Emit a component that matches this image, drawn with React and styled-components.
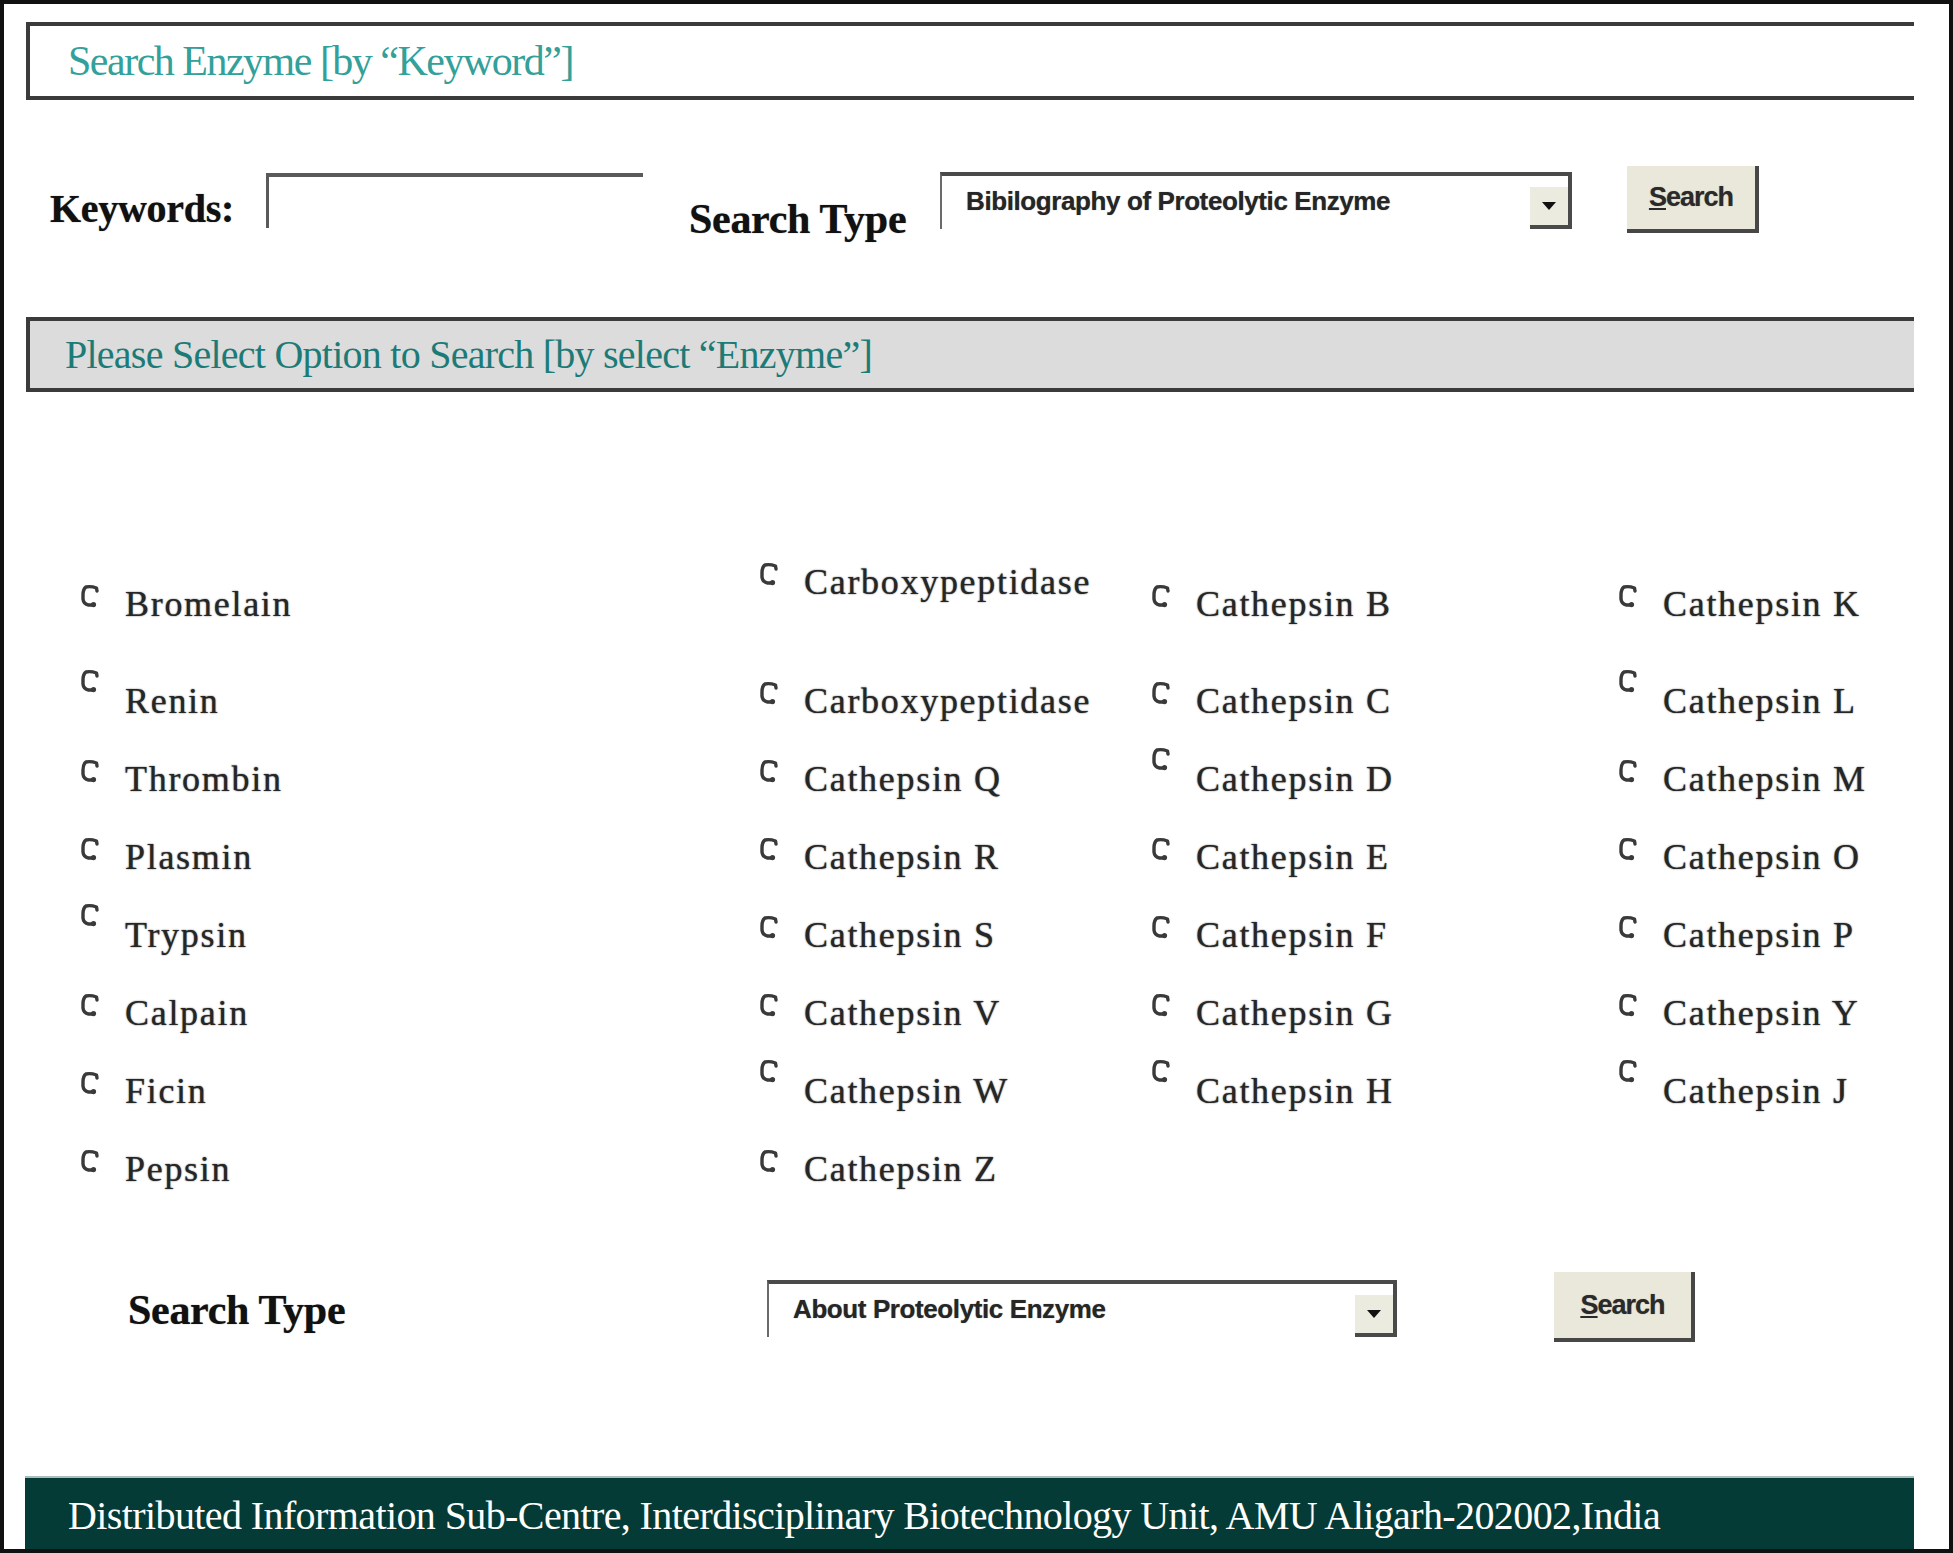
import React from 'react';
import styled, { createGlobalStyle } from 'styled-components';

const GlobalStyle = createGlobalStyle`
  html, body {
    margin: 0;
    padding: 0;
    background: #ffffff;
  }
  body {
    font-family: "Liberation Serif", "Times New Roman", serif;
  }
`;

const Frame = styled.div`
  width: 1953px;
  height: 1553px;
  box-sizing: border-box;
  border: 4px solid #111111;
  display: flex;
  flex-direction: column;
  background: #ffffff;
  overflow: hidden;
`;

const SectionBar = styled.div`
  box-sizing: border-box;
  height: ${(p) => p.$h}px;
  margin: ${(p) => p.$top}px 35px 0 22px;
  border-top: 4px solid #3b3b3b;
  border-left: 4px solid #3b3b3b;
  border-bottom: 4px solid #3b3b3b;
  background: ${(p) => (p.$shaded ? '#dcdcdc' : '#ffffff')};
  display: flex;
  align-items: center;
  padding-left: ${(p) => p.$pad}px;
`;

const SectionTitle = styled.span`
  font-family: "Liberation Serif", "Times New Roman", serif;
  font-size: ${(p) => p.$size}px;
  color: ${(p) => p.$color};
  letter-spacing: ${(p) => p.$ls}px;
  line-height: 1;
`;

const FormRow = styled.div`
  display: flex;
  align-items: flex-start;
  margin-top: ${(p) => p.$top}px;
  padding-left: ${(p) => p.$pad}px;
  height: ${(p) => p.$h}px;
`;

const FieldLabel = styled.span`
  font-family: "Liberation Serif", "Times New Roman", serif;
  font-weight: bold;
  font-size: ${(p) => p.$size}px;
  line-height: 44px;
  color: #111111;
  width: ${(p) => p.$w}px;
  margin-top: ${(p) => p.$mt}px;
  margin-right: ${(p) => p.$gap}px;
  white-space: nowrap;
  letter-spacing: -0.3px;
  text-shadow: 0 0 1px rgba(0, 0, 0, 0.6);
`;

const TextBox = styled.div`
  box-sizing: border-box;
  width: 377px;
  height: 55px;
  margin-top: 7px;
  margin-right: 46px;
  border-top: 4px solid #5a5a5a;
  border-left: 3px solid #5a5a5a;
`;

const SelectBox = styled.div`
  box-sizing: border-box;
  width: ${(p) => p.$w}px;
  height: 57px;
  margin-top: ${(p) => p.$mt}px;
  margin-right: ${(p) => p.$gap}px;
  border-top: 4px solid #4a4a4a;
  border-left: 2px solid #6a6a6a;
  border-right: 4px solid #4a4a4a;
  display: flex;
  align-items: flex-start;
  justify-content: space-between;
`;

const SelectText = styled.span`
  font-family: "Liberation Sans", Arial, sans-serif;
  font-weight: bold;
  font-size: 26px;
  letter-spacing: -0.4px;
  color: #262626;
  margin-top: 10px;
  margin-left: 24px;
  white-space: nowrap;
  text-shadow: 0 0 1px rgba(0, 0, 0, 0.5);
`;

const ArrowButton = styled.div`
  box-sizing: border-box;
  align-self: flex-end;
  width: 38px;
  height: 42px;
  background: #ecebdf;
  border-bottom: 4px solid #4a4a4a;
  display: flex;
  align-items: center;
  justify-content: center;
`;

const PushButton = styled.div`
  box-sizing: border-box;
  width: ${(p) => p.$w}px;
  height: ${(p) => p.$h}px;
  margin-top: ${(p) => p.$mt}px;
  background: #e9e8da;
  border-right: 4px solid #474747;
  border-bottom: 4px solid #474747;
  display: flex;
  align-items: center;
  justify-content: center;
  font-family: "Liberation Sans", Arial, sans-serif;
  font-size: 27px;
  font-weight: bold;
  letter-spacing: -1px;
  color: #2a2a2a;
  text-shadow: 0 0 1px rgba(0, 0, 0, 0.4);
`;

const Accel = styled.span`
  text-decoration: underline;
`;

const OptionGrid = styled.div`
  display: grid;
  grid-template-columns: 679px 392px 467px 1fr;
  grid-template-rows: 116px repeat(7, 78px);
  margin-top: 154px;
  margin-left: 76px;
`;

const Option = styled.label`
  display: flex;
  align-items: center;
  align-self: center;
  margin-bottom: ${(p) => (p.$raise ? 44 : 0)}px;
`;

const RadioMark = styled.svg`
  width: 21px;
  height: 26px;
  flex: none;
  margin-right: 24px;
  margin-bottom: ${(p) => (p.$high ? 40 : 16)}px;
`;

const OptionText = styled.span`
  font-family: "Liberation Serif", "Times New Roman", serif;
  font-size: 36px;
  line-height: 44px;
  letter-spacing: 1.7px;
  color: #262626;
  white-space: nowrap;
  text-shadow: 0 0 1.5px rgba(0, 0, 0, 0.75);
`;

const Footer = styled.div`
  box-sizing: border-box;
  margin: auto 35px 0 21px;
  height: 73px;
  background: #053b36;
  border-top: 2px solid #a9bdbb;
  display: flex;
  align-items: center;
  padding-left: 43px;
  padding-top: 4px;
  font-family: "Liberation Serif", "Times New Roman", serif;
  font-size: 40px;
  letter-spacing: -0.6px;
  color: #ffffff;
  white-space: nowrap;
`;

const Radio = ({ high }) => (
  <RadioMark $high={high} viewBox="0 0 21 26">
    <path
      d="M17 8 L16.5 5 Q11 3 6 4 Q3 6 3 12 L3 16 Q3.5 21 8.5 22 L13 22"
      fill="none"
      stroke="#3a3a3a"
      strokeWidth="3.4"
      strokeLinecap="round"
      strokeLinejoin="round"
    />
    <circle cx="13.5" cy="21.6" r="2.6" fill="#3a3a3a" />
  </RadioMark>
);

const DownArrow = () => (
  <svg width="14" height="10" viewBox="0 0 14 10">
    <path d="M0 1 L14 1 L7 9 Z" fill="#111" />
  </svg>
);

const columns = [
  [
    { name: 'Bromelain' },
    { name: 'Renin', high: true },
    { name: 'Thrombin' },
    { name: 'Plasmin' },
    { name: 'Trypsin', high: true },
    { name: 'Calpain' },
    { name: 'Ficin' },
    { name: 'Pepsin' },
  ],
  [
    { name: 'Carboxypeptidase', raise: true },
    { name: 'Carboxypeptidase' },
    { name: 'Cathepsin Q' },
    { name: 'Cathepsin R' },
    { name: 'Cathepsin S' },
    { name: 'Cathepsin V' },
    { name: 'Cathepsin W', high: true },
    { name: 'Cathepsin Z' },
  ],
  [
    { name: 'Cathepsin B' },
    { name: 'Cathepsin C' },
    { name: 'Cathepsin D', high: true },
    { name: 'Cathepsin E' },
    { name: 'Cathepsin F' },
    { name: 'Cathepsin G' },
    { name: 'Cathepsin H', high: true },
  ],
  [
    { name: 'Cathepsin K' },
    { name: 'Cathepsin L', high: true },
    { name: 'Cathepsin M' },
    { name: 'Cathepsin O' },
    { name: 'Cathepsin P' },
    { name: 'Cathepsin Y' },
    { name: 'Cathepsin J', high: true },
  ],
];

const App = () => {
  return (
    <>
      <GlobalStyle />
      <Frame>
        <SectionBar $top={18} $h={78} $pad={38}>
          <SectionTitle $size={42} $ls={-1.5} $color="#33a09a">
            Search Enzyme [by “Keyword”]
          </SectionTitle>
        </SectionBar>

        <FormRow $top={66} $pad={46} $h={67}>
          <FieldLabel $size={40} $w={187} $mt={21} $gap={29}>Keywords:</FieldLabel>
          <TextBox />
          <FieldLabel $size={42} $w={214} $mt={31} $gap={37}>Search Type</FieldLabel>
          <SelectBox $w={632} $mt={6} $gap={55}>
            <SelectText>Bibilography of Proteolytic Enzyme</SelectText>
            <ArrowButton>
              <DownArrow />
            </ArrowButton>
          </SelectBox>
          <PushButton $w={132} $h={67} $mt={0}>
            <Accel>S</Accel>earch
          </PushButton>
        </FormRow>

        <SectionBar $top={84} $h={75} $pad={35} $shaded>
          <SectionTitle $size={40} $ls={-0.75} $color="#1d7b77">
            Please Select Option to Search [by select “Enzyme”]
          </SectionTitle>
        </SectionBar>

        <OptionGrid>
          {columns.map((col, ci) =>
            col.map((item, ri) => (
              <Option
                key={`${ci}-${ri}`}
                $raise={item.raise}
                style={{ gridColumn: ci + 1, gridRow: ri + 1 }}
              >
                <Radio high={item.high} />
                <OptionText>{item.name}</OptionText>
              </Option>
            ))
          )}
        </OptionGrid>

        <FormRow $top={62} $pad={124} $h={72}>
          <FieldLabel $size={42} $w={218} $mt={18} $gap={421}>Search Type</FieldLabel>
          <SelectBox $w={630} $mt={10} $gap={157}>
            <SelectText>About Proteolytic Enzyme</SelectText>
            <ArrowButton>
              <DownArrow />
            </ArrowButton>
          </SelectBox>
          <PushButton $w={141} $h={70} $mt={2}>
            <Accel>S</Accel>earch
          </PushButton>
        </FormRow>

        <Footer>
          Distributed Information Sub-Centre, Interdisciplinary Biotechnology Unit, AMU Aligarh-202002,India
        </Footer>
      </Frame>
    </>
  );
};

export default App;
